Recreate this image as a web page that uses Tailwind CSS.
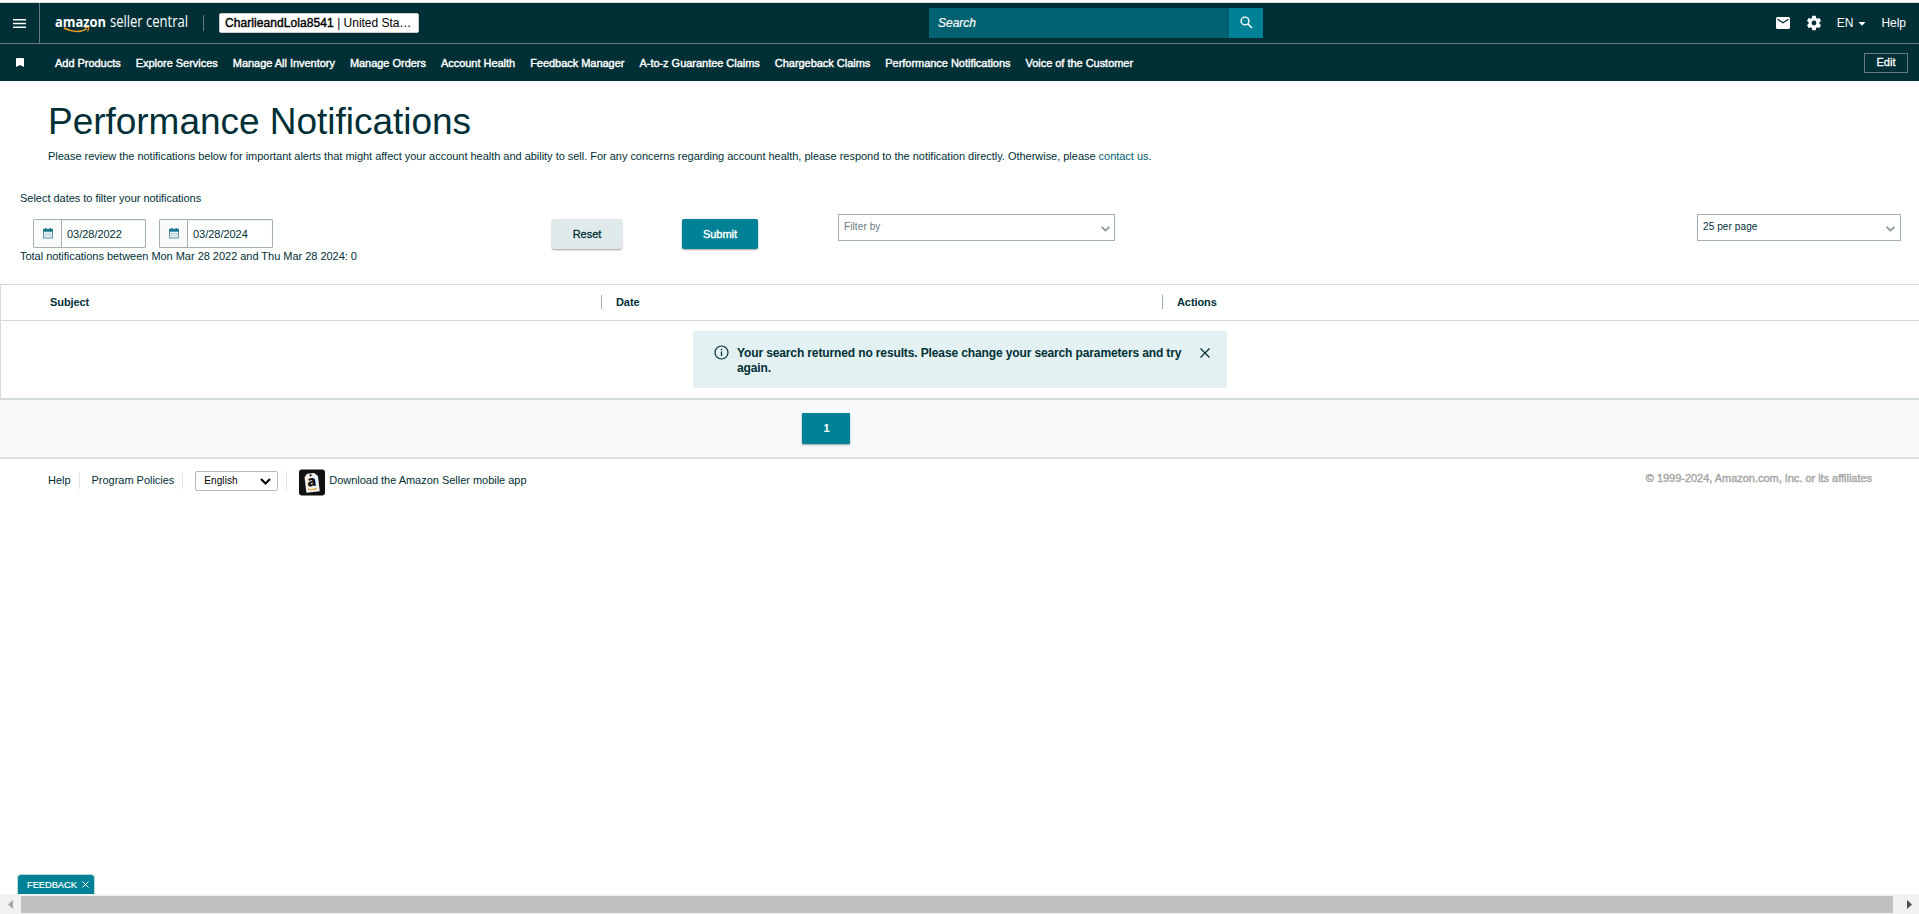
<!DOCTYPE html>
<html lang="en">
<head>
    <meta charset="UTF-8">
    <title>Performance Notifications</title>
    <script src="https://cdn.jsdelivr.net/npm/@tailwindcss/browser@4"></script>
</head>
<body class="bg-white font-['Liberation_Sans',Arial,sans-serif] text-[11px] leading-[14px] tracking-[-0.025px] text-[#002f36]">
<div class="h-[914px] flex flex-col overflow-hidden">

    <!-- top bar -->
    <div class="h-[3px] shrink-0 border-b border-[#dddddd]"></div>
    <header class="h-[41px] shrink-0 flex items-center bg-[#002f36] border-b border-[#667b80] text-white text-xs leading-[14px]">
        <button class="w-10 h-full shrink-0 flex items-center justify-center border-r border-[#667b80]">
            <svg width="13" height="9" viewBox="0 0 13 9" fill="none" stroke="#fff" stroke-width="1.4"><path d="M0 .8h13M0 4.5h13M0 8.2h13"/></svg>
        </button>
        <svg class="ml-[15px] shrink-0 overflow-visible" width="140" height="30" viewBox="0 0 140 30">
            <text x="0" y="18.500" textLength="51" lengthAdjust="spacingAndGlyphs" font-family="Open Sans" font-weight="700" font-size="14.5" fill="#fff">amazon</text>
            <text x="55" y="18.500" textLength="78" lengthAdjust="spacingAndGlyphs" font-family="Open Sans" font-weight="400" font-size="15.5" fill="#fff">seller central</text>
            <path d="M9 20q12 6.500 23 .8" fill="none" stroke="#f19e22" stroke-width="1.500"/>
            <path d="M29.500 19.800q3.200-1 4.300-.3.500 1.500-1.400 4" fill="none" stroke="#f19e22" stroke-width="1.100"/>
        </svg>
        <div class="ml-2 w-px h-4 bg-[#667b80]"></div>
        <div class="ml-[15px] w-[200px] h-5 pl-[5px] rounded-[2px] bg-white border border-[#cccccc] text-black leading-[18px] whitespace-nowrap"><span class="tracking-[0.08px] [-webkit-text-stroke:0.4px]">CharlieandLola8541</span> | United Sta…</div>
        <div class="ml-[510px] w-[300px] h-[30px] pl-[9px] bg-[#006170] italic leading-[31px] [-webkit-text-stroke:0.2px]">Search</div>
        <button class="w-[34px] h-[30px] flex items-center justify-center bg-[#008296]">
            <svg class="-mt-px" width="13" height="13" viewBox="0 0 13 13" fill="none" stroke="#fff" stroke-width="1.4"><circle cx="5" cy="5" r="3.900"/><path d="M7.800 7.800l4.200 4.200" stroke-width="1.600"/></svg>
        </button>
        <div class="ml-auto mr-[13px] flex items-center">
            <svg width="14" height="12" viewBox="0 0 14 12"><rect width="14" height="12" rx="1.500" fill="#fff"/><path d="M1.500 2.200L7 5.800l5.500-3.600" fill="none" stroke="#002f36" stroke-width="1.300"/></svg>
            <svg class="ml-[15px]" width="18" height="18" viewBox="0 0 24 24" fill="#fff"><path d="M19.140 12.940c.04-.3.060-.61.060-.94 0-.32-.02-.64-.07-.94l2.030-1.580a.49.49 0 0 0 .12-.61l-1.920-3.320a.488.488 0 0 0-.59-.22l-2.390.96c-.5-.38-1.030-.7-1.620-.94l-.36-2.540a.484.484 0 0 0-.48-.41h-3.840c-.24 0-.43.17-.47.41l-.36 2.540c-.59.24-1.130.57-1.620.94l-2.390-.96c-.22-.08-.47 0-.59.22L2.740 8.870c-.12.21-.08.47.12.61l2.030 1.580c-.05.3-.09.63-.09.94s.02.64.07.94l-2.030 1.580a.49.49 0 0 0-.12.61l1.920 3.320c.12.22.37.29.59.22l2.390-.96c.5.38 1.030.7 1.620.94l.36 2.540c.05.24.24.41.48.41h3.840c.24 0 .44-.17.47-.41l.36-2.540c.59-.24 1.130-.56 1.620-.94l2.390.96c.22.080.47 0 .59-.22l1.920-3.320c.12-.22.070-.47-.12-.61zM12 15.200a3.200 3.200 0 1 1 0-6.400 3.200 3.200 0 0 1 0 6.400z"/></svg>
            <span class="ml-[14px]">EN</span>
            <svg class="ml-[5px] mt-px" width="8" height="4" viewBox="0 0 7 4" fill="#fff"><path d="M0 0h7L3.500 3.800z"/></svg>
            <span class="ml-[15px]">Help</span>
        </div>
    </header>

    <!-- bookmarks bar -->
    <nav class="h-[37px] shrink-0 flex items-center bg-[#002f36] text-white whitespace-nowrap">
        <svg class="ml-4 mr-[31px]" width="8" height="9" viewBox="0 0 8 9" fill="#fff"><path d="M1 0h6q1 0 1 1v8L4 7 0 9V1q0-1 1-1z"/></svg>
        <div class="flex gap-[15px] pt-px tracking-[-0.03px] [-webkit-text-stroke:0.4px]">
            <a>Add Products</a>
            <a>Explore Services</a>
            <a>Manage All Inventory</a>
            <a>Manage Orders</a>
            <a>Account Health</a>
            <a>Feedback Manager</a>
            <a>A-to-z Guarantee Claims</a>
            <a>Chargeback Claims</a>
            <a>Performance Notifications</a>
            <a>Voice of the Customer</a>
        </div>
        <button class="ml-auto mr-[11px] w-11 h-5 pb-px border border-[#667b80] [-webkit-text-stroke:0.3px]">Edit</button>
    </nav>

    <main class="h-[203px] shrink-0 flex flex-col">
        <h1 class="mt-5 ml-12 h-[42px] text-[37px] leading-[42px]">Performance Notifications</h1>
        <p class="mt-[6px] ml-12">Please review the notifications below for important alerts that might affect your account health and ability to sell. For any concerns regarding account health, please respond to the notification directly. Otherwise, please <a class="text-[#006170]">contact us</a>.</p>
        <p class="mt-[28px] ml-5">Select dates to filter your notifications</p>
        <div class="mt-[9px] h-[35px] flex items-start">
            <div class="mt-[5px] ml-[33px] w-[113px] h-[29px] flex border border-[#a2b1b4] rounded-[1px] shadow-[inset_0_1px_1px_#00000018]">
                <div class="w-7 h-full pl-px flex items-center justify-center bg-[#fafafa] border-r border-[#a2b1b4]">
                    <svg class="-mt-px" width="10" height="11" viewBox="0 0 11 12"><path d="M.5 1.500h10V11H.5z" fill="#e8f2f4" stroke="#4b8795"/><path d="M0 1h11v3.200H0zM2 0h2v2H2zM7 0h2v2H7z" fill="#1c7a90"/><path d="M2 6h7M2 8h7" stroke="#8fb2ba" stroke-dasharray="1 1"/></svg>
                </div>
                <span class="ml-[5px] leading-[28px]">03/28/2022</span>
            </div>
            <div class="mt-[5px] ml-[13px] w-[114px] h-[29px] flex border border-[#a2b1b4] rounded-[1px] shadow-[inset_0_1px_1px_#00000018]">
                <div class="w-7 h-full pl-px flex items-center justify-center bg-[#fafafa] border-r border-[#a2b1b4]">
                    <svg class="-mt-px" width="10" height="11" viewBox="0 0 11 12"><path d="M.5 1.500h10V11H.5z" fill="#e8f2f4" stroke="#4b8795"/><path d="M0 1h11v3.200H0zM2 0h2v2H2zM7 0h2v2H7z" fill="#1c7a90"/><path d="M2 6h7M2 8h7" stroke="#8fb2ba" stroke-dasharray="1 1"/></svg>
                </div>
                <span class="ml-[5px] leading-[28px]">03/28/2024</span>
            </div>
            <button class="mt-[5px] ml-[279px] w-[70px] h-[30px] rounded-[2px] bg-[#e1eaeb] shadow-[0_1px_2px_#00000060] [-webkit-text-stroke:0.3px]">Reset</button>
            <button class="mt-[5px] ml-[60px] w-[76px] h-[30px] rounded-[2px] bg-[#008296] text-white shadow-[0_1px_2px_#00000060] [-webkit-text-stroke:0.4px]">Submit</button>
            <div class="ml-[80px] w-[277px] h-[27px] pl-[5px] pr-[4px] flex justify-between border border-[#a2b1b4] text-[10px] tracking-[0.1px] text-[#6b7c80] leading-[24px]">
                Filter by
                <svg class="mt-[11px]" width="9" height="6" viewBox="0 0 9 6" fill="none" stroke="#82959a" stroke-width="1.700"><path d="M.6.8L4.500 4.600 8.400.8"/></svg>
            </div>
            <div class="ml-auto mr-[18px] w-[204px] h-[27px] pl-[5px] pr-[5px] flex justify-between border border-[#a2b1b4] text-[10px] tracking-[0.1px] leading-[24px]">
                25 per page
                <svg class="mt-[11px]" width="9" height="6" viewBox="0 0 9 6" fill="none" stroke="#82959a" stroke-width="1.700"><path d="M.6.8L4.500 4.600 8.400.8"/></svg>
            </div>
        </div>
        <p class="ml-5">Total notifications between Mon Mar 28 2022 and Thu Mar 28 2024: 0</p>
    </main>

    <!-- results -->
    <section class="h-[116px] shrink-0 border-l border-y border-b-2 border-[#d5dbdb]">
        <div class="h-9 pb-px flex items-center border-b border-[#d5dbdb] font-bold tracking-[-0.08px]">
            <div class="w-[600px] pl-[49px]">Subject</div>
            <div class="w-[561px] pl-[14px] border-l border-[#a2b1b4]">Date</div>
            <div class="pl-[14px] border-l border-[#a2b1b4]">Actions</div>
        </div>
        <div class="mt-[10px] ml-[692px] w-[534px] h-[57px] pl-[21px] pr-[17px] flex items-start bg-[#e3f1f2] text-xs leading-[15px]">
            <svg class="mt-[14px] shrink-0" width="15" height="15" viewBox="0 0 15 15" fill="none" stroke="#002f36"><circle cx="7.500" cy="7.500" r="6.500" stroke-width="1.200"/><path d="M7.500 6.500v4.500M7.500 3.800v1.400" stroke-width="1.300"/></svg>
            <p class="mt-[15px] ml-[8px] w-[456px] font-bold tracking-[-0.125px]">Your search returned no results. Please change your search parameters and try<br>again.</p>
            <svg class="mt-[17px] ml-auto shrink-0" width="10" height="10" viewBox="0 0 10 10" stroke="#002f36" stroke-width="1.200"><path d="M.5.5l9 9M9.500.5l-9 9"/></svg>
        </div>
    </section>
    <div class="h-[59px] shrink-0 bg-[#f9fafc] border-b-2 border-[#dfe3e5]">
        <button class="mt-[13px] ml-[802px] w-12 h-[31px] pb-[2px] pl-px rounded-[1px] bg-[#008296] text-white font-bold shadow-[0_1px_2px_#00000060]">1</button>
    </div>

    <footer class="h-[43px] shrink-0 pl-12 pr-[47px] flex items-center">
        <a class="-mt-[2px]">Help</a>
        <div class="ml-2 w-px h-4 bg-[#e1e4e5]"></div>
        <a class="ml-3 -mt-[2px]">Program Policies</a>
        <div class="ml-2 w-px h-4 bg-[#e1e4e5]"></div>
        <div class="ml-3 mt-px w-[83px] h-5 pl-[8px] pr-[6px] flex items-center justify-between border border-[#b5b9ba] rounded-[2px] text-[10px] text-black">
            <span class="tracking-[0.1px]">English</span>
            <svg width="11" height="7" viewBox="0 0 11 7" fill="none" stroke="#000" stroke-width="2"><path d="M1 1l4.500 4.500L10 1"/></svg>
        </div>
        <div class="ml-2 w-px h-5 bg-[#e1e4e5]"></div>
        <svg class="ml-[12px] mt-[4px]" width="26" height="27" viewBox="0 0 27 27">
            <rect width="27" height="27" rx="3" fill="#111"/>
            <g transform="rotate(-7 13 14)">
                <path d="M9.500 4h7.500l3.500 3.500v16H6.500V7.500z" fill="#f2f2f2"/>
                <circle cx="13" cy="6" r="1.100" fill="#111"/>
                <text x="13.200" y="17.500" text-anchor="middle" font-family="Open Sans" font-weight="800" font-size="15" fill="#111">a</text>
                <path d="M8.500 19.500q4.500 3 9 .3" fill="none" stroke="#f19e22" stroke-width="1.200"/>
            </g>
        </svg>
        <a class="ml-1 -mt-[2px]">Download the Amazon Seller mobile app</a>
        <span class="ml-auto -mt-[6px] text-[#a5a5a5] [-webkit-text-stroke:0.4px]">© 1999-2024, Amazon.com, Inc. or its affiliates</span>
    </footer>

    <div class="mt-auto ml-[17px] w-[78px] h-5 shrink-0 pl-[9px] flex items-center rounded-t-[4px] border border-b-0 border-[#b9dbe0] bg-[#008296] text-white text-[9.300px] [-webkit-text-stroke:0.2px]">
        FEEDBACK
        <svg class="ml-[5px]" width="7" height="7" viewBox="0 0 7 7" stroke="#fff"><path d="M.5.5l6 6M6.500.5l-6 6"/></svg>
    </div>

    <!-- horizontal scrollbar -->
    <div class="h-5 shrink-0 flex items-center bg-[#f1f1f1]">
        <svg class="ml-2" width="5" height="9" viewBox="0 0 5 9" fill="#a3a3a3"><path d="M5 0v9L0 4.500z"/></svg>
        <div class="ml-2 w-[1872px] h-[17px] mt-px bg-[#c1c1c1]"></div>
        <svg class="ml-[14px]" width="5" height="9" viewBox="0 0 5 9" fill="#505050"><path d="M0 0v9l5-4.500z"/></svg>
    </div>
</div>
</body>
</html>
